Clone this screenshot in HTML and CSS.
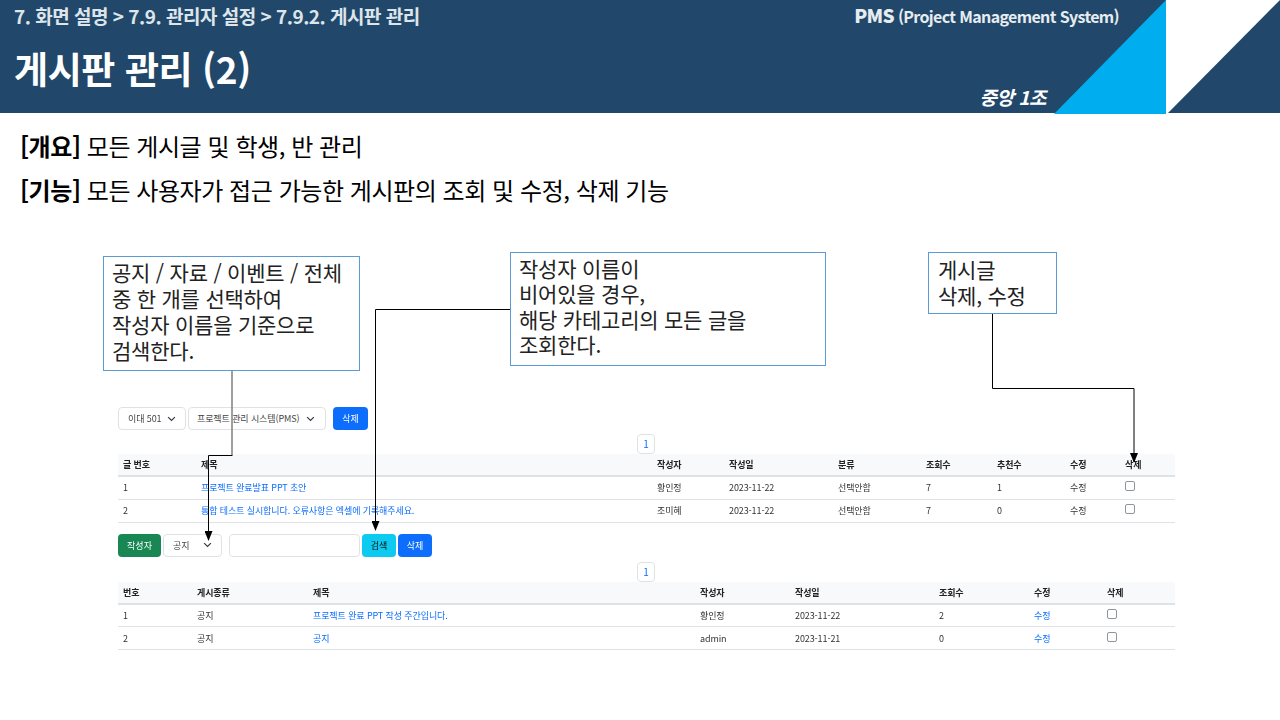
FILE: index.html
```html
<!DOCTYPE html>
<html lang="ko">
<head>
    <meta charset="UTF-8">
    <meta name="viewport" content="width=device-width, initial-scale=1.0">
    <title>게시판 관리 (2)</title>
    <link rel="stylesheet" href="styles.css">
</head>
<body>
    <div class="slide">
        <header class="slide-header">
            <div class="header-text">
                <div class="breadcrumb">7. 화면 설명 &gt; 7.9. 관리자 설정 &gt; 7.9.2. 게시판 관리</div>
                <h1 class="slide-title">게시판 관리 (2)</h1>
            </div>
            <div class="header-side">
                <div class="project-name"><strong>PMS</strong> (Project Management System)</div>
                <div class="team-name">중앙 1조</div>
            </div>
            <svg class="header-art" width="226" height="114" viewBox="0 0 226 114">
                <polygon points="0,114 112,0 112,114" fill="#00aeef"/>
                <rect x="112" y="0" width="114" height="114" fill="#fff"/>
                <polygon points="114,113 226,0 226,113" fill="#21486a"/>
            </svg>
        </header>

        <section class="summary">
            <p><b>[개요]</b> 모든 게시글 및 학생, 반 관리</p>
            <p><b>[기능]</b> 모든 사용자가 접근 가능한 게시판의 조회 및 수정, 삭제 기능</p>
        </section>

        <section class="capture">
            <div class="toolbar">
                <div class="select select-class">이대 501<svg class="chevron" viewBox="0 0 12 8"><path d="M1.5 1.5 6 6l4.5-4.5"/></svg></div>
                <div class="select select-project">프로젝트 관리 시스템(PMS)<svg class="chevron" viewBox="0 0 12 8"><path d="M1.5 1.5 6 6l4.5-4.5"/></svg></div>
                <button class="btn btn-blue btn-top">삭제</button>
            </div>
            <div class="pager"><span>1</span></div>
            <table class="board board-posts">
                <colgroup>
                    <col class="p1"><col class="p2"><col class="p3"><col class="p4"><col class="p5"><col class="p6"><col class="p7"><col class="p8"><col class="p9">
                </colgroup>
                <thead>
                    <tr><th>글 번호</th><th>제목</th><th>작성자</th><th>작성일</th><th>분류</th><th>조회수</th><th>추천수</th><th>수정</th><th>삭제</th></tr>
                </thead>
                <tbody>
                    <tr><td>1</td><td><a>프로젝트 완료발표 PPT 초안</a></td><td>황인정</td><td>2023-11-22</td><td>선택안함</td><td>7</td><td>1</td><td>수정</td><td><i class="check"></i></td></tr>
                    <tr><td>2</td><td><a>통합 테스트 실시합니다. 오류사항은 엑셀에 기록해주세요.</a></td><td>조미혜</td><td>2023-11-22</td><td>선택안함</td><td>7</td><td>0</td><td>수정</td><td><i class="check"></i></td></tr>
                </tbody>
            </table>

            <div class="toolbar toolbar-search">
                <button class="btn btn-green">작성자</button>
                <div class="select select-kind">공지<svg class="chevron" viewBox="0 0 12 8"><path d="M1.5 1.5 6 6l4.5-4.5"/></svg></div>
                <div class="search-input"></div>
                <button class="btn btn-cyan">검색</button>
                <button class="btn btn-blue btn-narrow">삭제</button>
            </div>
            <div class="pager pager-lower"><span>1</span></div>
            <table class="board board-notices">
                <colgroup>
                    <col class="n1"><col class="n2"><col class="n3"><col class="n4"><col class="n5"><col class="n6"><col class="n7"><col class="n8">
                </colgroup>
                <thead>
                    <tr><th>번호</th><th>게시종류</th><th>제목</th><th>작성자</th><th>작성일</th><th>조회수</th><th>수정</th><th>삭제</th></tr>
                </thead>
                <tbody>
                    <tr><td>1</td><td>공지</td><td><a>프로젝트 완료 PPT 작성 주간입니다.</a></td><td>황인정</td><td>2023-11-22</td><td>2</td><td><a>수정</a></td><td><i class="check"></i></td></tr>
                    <tr><td>2</td><td>공지</td><td><a>공지</a></td><td>admin</td><td>2023-11-21</td><td>0</td><td><a>수정</a></td><td><i class="check"></i></td></tr>
                </tbody>
            </table>
        </section>

        <!-- callouts sit on top of the captured screen -->
        <svg class="connectors" width="1280" height="720" viewBox="0 0 1280 720">
            <defs>
                <marker id="head" markerWidth="10" markerHeight="8" refX="9" refY="4" orient="auto" markerUnits="userSpaceOnUse">
                    <path d="M0 0 10 4 0 8z" fill="#000"/>
                </marker>
            </defs>
            <path class="gray" d="M232 370V455"/>
            <path d="M232.500 455.500H208.500V540" marker-end="url(#head)"/>
            <path d="M510 309.500H375.500V530" marker-end="url(#head)"/>
            <path d="M992.500 313V388.500H1134V462" marker-end="url(#head)"/>
        </svg>
        <div class="callout callout-search">공지 / 자료 / 이벤트 / 전체<br>중 한 개를 선택하여<br>작성자 이름을 기준으로<br>검색한다.</div>
        <div class="callout callout-empty">작성자 이름이<br>비어있을 경우,<br>해당 카테고리의 모든 글을<br>조회한다.</div>
        <div class="callout callout-edit">게시글<br>삭제, 수정</div>
    </div>
</body>
</html>
```

FILE: styles.css
```css
* {
    box-sizing: border-box;
}

body {
    margin: 0;
    background: #fff;
    font-family: "Noto Sans CJK KR", "Noto Sans", sans-serif;
    color: #000;
}

.slide {
    position: relative;
    width: 1280px;
    height: 720px;
    overflow: hidden;
}

/* header band */
.slide-header {
    position: relative;
    display: flex;
    justify-content: space-between;
    height: 113px;
    width: 1168px;
    padding-left: 14px;
    background: #21486a;
    color: #fff;
}

.breadcrumb {
    margin-top: 2px;
    font-size: 19px;
    line-height: 27px;
    font-weight: 700;
    letter-spacing: -0.5px;
    color: #dde5ea;
}

.slide-title {
    margin: 12px 0 0;
    font-size: 37px;
    line-height: 54px;
    font-weight: 700;
    letter-spacing: -0.4px;
}

.header-side {
    display: flex;
    flex-direction: column;
    align-items: flex-end;
    justify-content: space-between;
    margin-right: 49px;
    padding: 3px 0 3px;
}

.project-name {
    font-size: 16px;
    line-height: 24px;
    font-weight: 700;
    letter-spacing: -0.65px;
    color: #e6ecf0;
}

.project-name strong {
    font-size: 19px;
}

.team-name {
    margin-right: 73px;
    font-size: 19px;
    line-height: 26px;
    font-weight: 700;
    font-style: italic;
    letter-spacing: -0.5px;
}

.header-art {
    position: absolute;
    left: 1054px;
    top: 0;
}

/* summary lines */
.summary {
    padding: 16px 0 0 20px;
    font-size: 24px;
    letter-spacing: -0.45px;
}

.summary p {
    margin: 0 0 10px;
    line-height: 34px;
}

.summary b {
    font-weight: 700;
}

/* captured screen */
.capture {
    position: absolute;
    top: 407px;
    left: 118px;
    width: 1057px;
    font-size: 9px;
    letter-spacing: -0.1px;
    color: #333;
    filter: blur(0.45px);
}

.toolbar {
    display: flex;
    align-items: stretch;
    gap: 2px;
    height: 23px;
}

.toolbar-search {
    margin-top: 11px;
}

.select {
    display: flex;
    align-items: center;
    justify-content: space-between;
    padding: 0 9px 0 9px;
    background: #fff;
    border: 1px solid #dee2e6;
    border-radius: 4px;
    color: #444;
}

.select-class {
    width: 68px;
}

.select-project {
    width: 138px;
    padding: 0 10px 0 8px;
}

.select-kind {
    width: 59px;
    margin-right: 5px;
}

.chevron {
    width: 9px;
    height: 6px;
    fill: none;
    stroke: #343a40;
    stroke-width: 1.6;
}

.search-input {
    width: 131px;
    background: #fff;
    border: 1px solid #dee2e6;
    border-radius: 4px;
}

.btn {
    width: 35px;
    padding: 0;
    border: 0;
    border-radius: 4px;
    font: inherit;
    color: #fff;
}

.btn-top {
    margin-left: 5px;
}

.btn-blue {
    background: #0d6efd;
}

.btn-narrow {
    width: 34px;
}

.btn-green {
    width: 43px;
    background: #198754;
}

.btn-cyan {
    width: 34px;
    background: #0dcaf0;
    color: #111;
}

.pager {
    display: flex;
    justify-content: center;
    height: 20px;
    margin-top: 4px;
    padding-right: 1px;
}

.pager-lower {
    margin-top: 5px;
}

.pager span {
    width: 18px;
    border: 1px solid #dee2e6;
    border-radius: 4px;
    color: #0d6efd;
    font-size: 10px;
    line-height: 18px;
    text-align: center;
}

.board {
    width: 100%;
    border-collapse: collapse;
    table-layout: fixed;
}

.board th {
    height: 22px;
    padding: 0 5px;
    background: #f8f9fa;
    border-bottom: 2px solid #dfe2e5;
    font-weight: 700;
    text-align: left;
    color: #222;
}

.board td {
    height: 23px;
    padding: 0 5px;
    border-bottom: 1px solid #dee2e6;
    white-space: nowrap;
}

.board-notices td {
    padding-top: 1px;
}

.board a {
    color: #0d6efd;
}

.check {
    display: block;
    width: 10px;
    height: 10px;
    margin-bottom: 3px;
    border: 1px solid #8f959a;
    border-radius: 2px;
}

.p1 { width: 78px; }
.p2 { width: 456px; }
.p3 { width: 72px; }
.p4 { width: 109px; }
.p5 { width: 88px; }
.p6 { width: 71px; }
.p7 { width: 73px; }
.p8 { width: 55px; }
.p9 { width: 55px; }

.n1 { width: 74px; }
.n2 { width: 116px; }
.n3 { width: 387px; }
.n4 { width: 95px; }
.n5 { width: 144px; }
.n6 { width: 95px; }
.n7 { width: 73px; }
.n8 { width: 73px; }

/* callouts */
.connectors {
    position: absolute;
    top: 0;
    left: 0;
}

.connectors path {
    fill: none;
    stroke: #000;
    stroke-width: 1;
}

.connectors marker path {
    fill: #000;
    stroke: none;
}

.connectors .gray {
    stroke: #7f7f7f;
    stroke-width: 1.5;
}

.callout {
    position: absolute;
    background: #fff;
    border: 1px solid #5b9bd5;
    font-size: 21px;
    line-height: 26px;
    letter-spacing: -0.22px;
    color: #222;
}

.callout-search {
    left: 103px;
    top: 256px;
    width: 257px;
    height: 115px;
    padding: 2px 8px;
}

.callout-empty {
    left: 510px;
    top: 252px;
    width: 316px;
    height: 114px;
    padding: 3px 8px;
    line-height: 25.3px;
}

.callout-edit {
    left: 928px;
    top: 252px;
    width: 129px;
    height: 62px;
    padding: 3px 9px;
}
```
